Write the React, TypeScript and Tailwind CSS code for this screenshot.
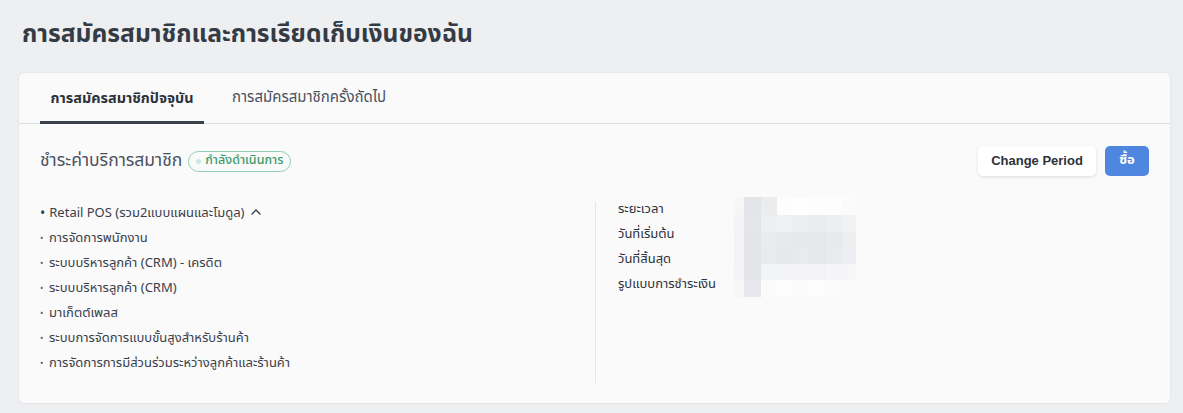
import React from "react";

const font = { fontFamily: '"Noto Sans Thai", "Liberation Sans", "Noto Sans", "DejaVu Sans", sans-serif' };

const items = [
  "การจัดการพนักงาน",
  "ระบบบริหารลูกค้า (CRM) - เครดิต",
  "ระบบบริหารลูกค้า (CRM)",
  "มาเก็ตต์เพลส",
  "ระบบการจัดการแบบขั้นสูงสำหรับร้านค้า",
  "การจัดการการมีส่วนร่วมระหว่างลูกค้าและร้านค้า",
];

const colW = [10, 17, 16, 16, 16, 17, 16, 14];
const rowH = [18, 17, 16, 16, 16, 17];
const cells: string[][] = [
  ["#f6f6f7", "#e3e4e7", "#ebecee", "#fdfdfd", "#fefefe", "#fdfdfd", "#fdfdfd", "#fbfbfb"],
  ["#f4f4f6", "#e5e6e9", "#eeeff1", "#eff0f2", "#eceef0", "#ebecef", "#edeef0", "#f1f2f4"],
  ["#f3f3f5", "#e4e5e8", "#eaebee", "#e8e9ec", "#e7e8eb", "#e6e7ea", "#e8e9ec", "#eceef0"],
  ["#f3f3f5", "#e4e5e8", "#e9eaed", "#e7e8eb", "#e9eaed", "#e7e8eb", "#e9eaed", "#edeef1"],
  ["#f4f4f6", "#e4e5e8", "#f3f4f6", "#f2f3f5", "#f4f4f6", "#f3f3f5", "#f4f5f7", "#f6f6f8"],
  ["#f6f6f7", "#e6e7ea", "#fbfbfb", "#fcfcfc", "#fbfbfb", "#fcfcfc", "#fbfbfb", "#fafafa"],
];

function Blur() {
  return (
    <div className="flex flex-col">
      {cells.map((row, r) => (
        <div key={r} className="flex">
          {row.map((c, i) => (
            <div key={i} style={{ width: colW[i], height: rowH[r], background: c }} />
          ))}
        </div>
      ))}
    </div>
  );
}

export default function App() {
  return (
    <div className="w-[1183px] h-[413px] bg-[#eeeff1] overflow-hidden" style={font}>
      <div className="pl-[22px] pt-[19px] h-[73px]">
        <h1 className="text-[24.6px] leading-[32px] font-bold text-[#353b45]">
          การสมัครสมาชิกและการเรียดเก็บเงินของฉัน
        </h1>
      </div>
      <div className="ml-[19px] w-[1151px] h-[330px] bg-[#fafafa] rounded-[5px] shadow-[0_0_0_1px_#e6e7ea,0_1px_2px_rgba(0,0,0,0.04)] flex flex-col">
        <div className="flex h-[51px] border-b border-[#d9dde3] pl-[21px]">
          <div className="relative w-[164px] flex items-center justify-center pt-[1px]">
            <span className="text-[14.4px] font-bold text-[#2d323a]">การสมัครสมาชิกปัจจุบัน</span>
            <div className="absolute left-0 right-0 bottom-[-1px] h-[3px] bg-[#3a404b]" />
          </div>
          <div className="flex items-center pl-[28px] pt-[1px]">
            <span className="text-[15px] text-[#4b5160]">การสมัครสมาชิกครั้งถัดไป</span>
          </div>
        </div>
        <div className="flex items-start justify-between pl-[21px] pr-[21px] pt-[22px]">
          <div className="flex items-center gap-[6px] pt-[2px]">
            <span className="text-[17.5px] text-[#4b5160]">ชำระค่าบริการสมาชิก</span>
            <span className="flex items-center gap-[4px] h-[21px] px-[7px] rounded-full border border-[#8fcfae] text-[12.5px] font-medium text-[#3a9a6b]">
              <span className="w-[5px] h-[5px] rounded-full bg-[#c9e9d8]" />
              กำลังดำเนินการ
            </span>
          </div>
          <div className="flex gap-[9px]">
            <button className="h-[30px] w-[118px] rounded-[5px] bg-white shadow-[0_1px_3px_rgba(0,0,0,0.12)] text-[13px] font-bold text-[#2d323a]" style={{ fontFamily: '"Liberation Sans", Arial, sans-serif' }}>
              Change Period
            </button>
            <button className="h-[30px] w-[44px] rounded-[5px] bg-[#4f86e0] text-[13px] font-bold text-white">
              ซื้อ
            </button>
          </div>
        </div>
        <div className="flex pl-[21px] pt-[20px]">
          <div className="w-[555px] flex flex-col pt-[5px]">
            <div className="h-[25px] flex items-center text-[13px] text-[#3a404b] gap-[4px]">
              <span className="text-[14px]">•</span>
              <span>Retail POS (รวม2แบบแผนและโมดูล)</span>
              <svg width="12" height="12" viewBox="0 0 12 12" className="ml-[2px] mb-[4px]">
                <path d="M2 8 L6 4 L10 8" fill="none" stroke="#3a404b" strokeWidth="1.4" strokeLinecap="round" strokeLinejoin="round" />
              </svg>
            </div>
            {items.map((t) => (
              <div key={t} className="h-[25px] flex items-center text-[13px] text-[#3a404b] gap-[5px]">
                <span className="text-[9px] text-[#5a606b] w-[4px]">•</span>
                <span>{t}</span>
              </div>
            ))}
          </div>
          <div className="w-px h-[181px] mt-[6px] bg-[#e4e6ea]" />
          <div className="flex pl-[22px]">
            <div className="flex flex-col w-[117px] pt-[1px]">
              {["ระยะเวลา", "วันที่เริ่มต้น", "วันที่สิ้นสุด", "รูปแบบการชำระเงิน"].map((l) => (
                <div key={l} className="h-[25px] flex items-center text-[13px] text-[#2d323a]">{l}</div>
              ))}
            </div>
            <div className="mt-[1px] -ml-[1px]">
              <Blur />
            </div>
          </div>
        </div>
      </div>
    </div>
  );
}
